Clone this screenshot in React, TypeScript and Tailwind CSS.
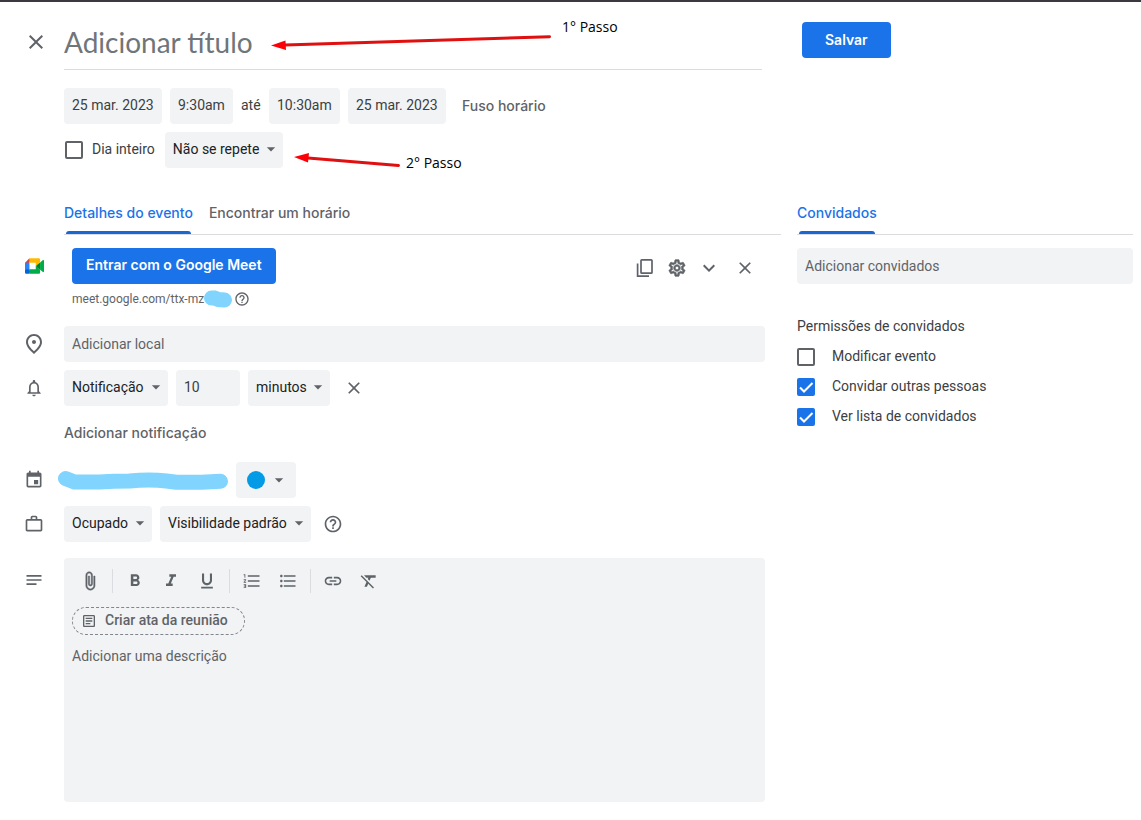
import { useState } from 'react';
import type { ReactNode } from 'react';
import clsx from 'clsx';
import {
    MdArrowDropDown,
    MdAttachFile,
    MdClose,
    MdEvent,
    MdExpandMore,
    MdFormatBold,
    MdFormatClear,
    MdFormatItalic,
    MdFormatListBulleted,
    MdFormatListNumbered,
    MdFormatUnderlined,
    MdHelpOutline,
    MdInsertLink,
    MdNotes,
    MdNotificationsNone,
    MdOutlineArticle,
    MdOutlinePlace,
    MdOutlineSettings,
    MdWorkOutline,
} from 'react-icons/md';

const field = 'h-9 rounded bg-[#f1f3f4] px-2 text-sm text-[#3c4043] outline-none placeholder:text-[#5f6368]';
const heading = "font-['Inter','Liberation_Sans',sans-serif] text-sm font-medium";
const primary = "h-9 rounded bg-[#1a73e8] font-['Inter','Liberation_Sans',sans-serif] text-sm font-semibold text-white";

interface RowProps {
    icon?: ReactNode;
    className?: string;
    children: ReactNode;
}

const Row = ({ icon, className, children }: RowProps) => (
    <div className="flex items-start">
        <div className="flex h-9 w-16 shrink-0 items-center justify-center pl-1 text-xl text-[#5f6368]">{icon}</div>
        <div className={clsx('flex min-w-0 flex-1 items-center gap-2', className)}>{children}</div>
    </div>
);

interface SelectProps {
    label: string;
    options: string[];
    width: string;
}

const Select = ({ label, options, width }: SelectProps) => (
    <div className={clsx('relative', width)}>
        <select
            aria-label={label}
            className="block h-9 w-full appearance-none rounded bg-[#f1f3f4] px-2 pb-0.5 text-sm text-[#202124] outline-none"
        >
            {options.map((option) => (
                <option key={option}>{option}</option>
            ))}
        </select>
        <MdArrowDropDown className="pointer-events-none absolute right-0.5 top-[7px] h-5 w-5 text-[#5f6368]" />
    </div>
);

interface CheckboxProps {
    label: string;
    defaultChecked?: boolean;
    className?: string;
}

const Checkbox = ({ label, defaultChecked = false, className }: CheckboxProps) => (
    <label className={clsx('flex items-center text-sm text-[#3c4043]', className)}>
        <span className="relative h-[18px] w-[18px] shrink-0">
            <input
                type="checkbox"
                defaultChecked={defaultChecked}
                className="peer block h-full w-full appearance-none rounded-xs border-2 border-[#5f6368] checked:border-[#1a73e8] checked:bg-[#1a73e8]"
            />
            <svg
                viewBox="0 0 18 18"
                className="pointer-events-none absolute inset-0 hidden fill-none stroke-white stroke-2 peer-checked:block"
            >
                <path d="M3 9.5l4 4 8.5-8.5" />
            </svg>
        </span>
        <span className="pb-0.5">{label}</span>
    </label>
);

interface TabProps {
    label: string;
    active?: boolean;
}

const Tab = ({ label, active = false }: TabProps) => (
    <button
        role="tab"
        aria-selected={active}
        className={clsx('relative h-[42px]', heading, active ? 'text-[#1a73e8]' : 'text-[#5f6368]')}
    >
        {label}
        {active && <span className="absolute inset-x-0.5 bottom-0 h-[3px] rounded-t-sm bg-[#1967d2]" />}
    </button>
);

interface IconButtonProps {
    label: string;
    className?: string;
    children: ReactNode;
}

const IconButton = ({ label, className = 'h-8 w-8', children }: IconButtonProps) => (
    <button
        aria-label={label}
        className={clsx('flex shrink-0 items-center justify-center text-xl text-[#5f6368]', className)}
    >
        {children}
    </button>
);

const MeetLogo = () => (
    <svg viewBox="0 0 87.5 72" className="h-4 w-[19px]">
        <path fill="#00832d" d="M49.5 36l8.53 9.75 11.47 7.33 2-17.02-2-16.64-11.69 6.44z" />
        <path fill="#0066da" d="M0 51.5V66c0 3.315 2.685 6 6 6h14.5l3-10.96-3-9.54-9.95-3z" />
        <path fill="#e94235" d="M20.5 0L0 20.5l10.55 3 9.95-3 2.95-9.41z" />
        <path fill="#2684fc" d="M20.5 20.5H0v31h20.5z" />
        <path
            fill="#00ac47"
            d="M82.6 8.68L69.5 19.42v33.66l13.16 10.79c1.97 1.54 4.85.135 4.85-2.37V11c0-2.535-2.945-3.925-4.91-2.32zM49.5 36v15.5h-29V72h43c3.315 0 6-2.685 6-6V53.08z"
        />
        <path fill="#ffba00" d="M63.5 0h-43v20.5h29V36l20-16.57V6c0-3.315-2.685-6-6-6z" />
    </svg>
);

const CopyIcon = () => (
    <svg viewBox="0 0 20 20" className="h-5 w-5 fill-none stroke-current" strokeWidth="1.7">
        <rect x="6" y="1.8" width="11" height="13.4" rx="0.8" />
        <path d="M2.6 5.5v12.7H14" />
    </svg>
);

// Marker strokes that hide the private parts of the page
const MeetScribble = () => (
    <svg viewBox="0 0 28 18" className="h-[18px] w-7 fill-none stroke-[#81d4fe]" strokeLinecap="round" strokeWidth="15">
        <path d="M7.5 8h3l4 1.500 6 .5" />
    </svg>
);

const CalendarScribble = () => (
    <svg
        viewBox="0 0 170 20"
        className="-ml-1.5 h-5 w-[170px] fill-none stroke-[#81d4fe]"
        strokeLinecap="round"
        strokeLinejoin="round"
        strokeWidth="15"
    >
        <path d="M7.500 8.500l9 3.500h25q14-1 30-1 20-2 37 0l10 1.300h25l19-1" />
    </svg>
);

// Red step arrows laid over the form
const Annotations = () => (
    <div className="pointer-events-none absolute -top-0.5 left-0 font-['Open_Sans','Noto_Sans',sans-serif] text-sm text-black">
        <svg viewBox="0 0 640 180" className="h-[180px] w-[640px]">
            <g stroke="#e01010" strokeWidth="3" strokeLinecap="round">
                <path d="M285 45L549.500 36.700" />
                <path d="M308 158L398.500 165.500" />
            </g>
            <g fill="#fb0007">
                <path d="M271 45.500L285.500 40.500L286 50z" />
                <path d="M294 157L309 153L308 162.500z" />
            </g>
        </svg>
        <span className="absolute left-[562px] top-[17px] whitespace-nowrap">1° Passo</span>
        <span className="absolute left-[406px] top-[153px] whitespace-nowrap">2° Passo</span>
    </div>
);

const Header = () => (
    <header className="flex gap-4 pt-4 pr-2">
        <div className="min-w-0 flex-1">
            <div className="flex pr-[19px]">
                <button aria-label="Fechar" className="flex h-12 w-16 shrink-0 items-center pl-6 text-2xl text-[#5f6368]">
                    <MdClose />
                </button>
                <input
                    aria-label="Adicionar título"
                    placeholder="Adicionar título"
                    className="h-[52px] min-w-0 flex-1 border-b border-[#dadce0] pb-1 font-['Lato','Liberation_Sans',sans-serif] text-[28px] text-[#3c4043] outline-none placeholder:text-[#70757a]"
                />
            </div>
            <div className="mt-[18px] flex flex-wrap items-center gap-2 pl-16 text-sm text-[#3c4043]">
                <input aria-label="Data de início" defaultValue="25 mar. 2023" className={clsx(field, 'w-[98px] pb-0.5')} />
                <input aria-label="Hora de início" defaultValue="9:30am" className={clsx(field, 'w-[63px] pb-0.5')} />
                <span className="w-5 pb-0.5">até</span>
                <input aria-label="Hora de término" defaultValue="10:30am" className={clsx(field, 'w-[71px] pb-0.5')} />
                <input aria-label="Data de término" defaultValue="25 mar. 2023" className={clsx(field, 'w-[98px] pb-0.5')} />
                <button className={clsx(heading, 'px-2 text-[#5f6368]')}>Fuso horário</button>
            </div>
            <div className="mt-2 flex items-center gap-2.5 pl-[65px]">
                <Checkbox label="Dia inteiro" className="gap-[9px]" />
                <Select label="Repetição" options={['Não se repete', 'Todos os dias']} width="w-[118px]" />
            </div>
        </div>
        <div className="w-[336px] shrink-0 pt-1 pl-[5px]">
            <button className={clsx(primary, 'px-[23px]')}>Salvar</button>
        </div>
    </header>
);

const Divider = () => <span className="mx-1 h-6 w-px bg-[#dadce0]" />;

const Editor = () => {
    const [text, setText] = useState('');

    return (
        <div className="flex min-w-0 flex-1 flex-col items-start rounded bg-[#f1f3f4] px-2 pt-[5px]">
            <div className="flex items-center">
                <IconButton label="Anexar arquivo" className="h-9 w-9">
                    <MdAttachFile className="stroke-current stroke-[0.6] [&>path:first-child]:stroke-none" />
                </IconButton>
                <Divider />
                <IconButton label="Negrito" className="h-9 w-9"><MdFormatBold /></IconButton>
                <IconButton label="Itálico" className="h-9 w-9"><MdFormatItalic /></IconButton>
                <IconButton label="Sublinhado" className="h-9 w-9"><MdFormatUnderlined /></IconButton>
                <Divider />
                <IconButton label="Lista numerada" className="h-9 w-9"><MdFormatListNumbered /></IconButton>
                <IconButton label="Lista com marcadores" className="h-9 w-9"><MdFormatListBulleted /></IconButton>
                <Divider />
                <IconButton label="Inserir link" className="h-9 w-9"><MdInsertLink /></IconButton>
                <IconButton label="Remover formatação" className="h-9 w-9"><MdFormatClear /></IconButton>
            </div>
            <button className="mt-2 flex h-7 items-center gap-2 rounded-full border border-dashed border-[#80868b] pl-2 pr-4 text-sm font-medium text-[#5f6368]">
                <MdOutlineArticle className="h-4 w-4" />
                <span className="pb-0.5">Criar ata da reunião</span>
            </button>
            <textarea
                aria-label="Adicionar uma descrição"
                placeholder="Adicionar uma descrição"
                value={text}
                onChange={(e) => setText(e.target.value)}
                className="mt-[11px] h-[156px] w-full resize-none text-sm text-[#3c4043] outline-none placeholder:text-[#5f6368]"
            />
        </div>
    );
};

const Details = () => (
    <main className="min-w-0 flex-1">
        <div role="tablist" className="ml-16 flex gap-4 border-b border-[#dadce0]">
            <Tab label="Detalhes do evento" active />
            <Tab label="Encontrar um horário" />
        </div>

        <div className="flex flex-col gap-2 pt-[13px] pr-4">
            <div>
                <Row icon={<MeetLogo />} className="pl-2">
                    <button className={clsx(primary, 'px-3.5 pb-0.5')}>Entrar com o Google Meet</button>
                    <div className="ml-auto flex items-center pt-1 pr-1">
                        <IconButton label="Copiar link"><CopyIcon /></IconButton>
                        <IconButton label="Opções de videochamada">
                            <MdOutlineSettings className="stroke-current stroke-[0.8] [&>path:first-child]:stroke-none" />
                        </IconButton>
                        <IconButton label="Mostrar detalhes"><MdExpandMore className="h-6 w-6" /></IconButton>
                        <IconButton label="Remover videochamada" className="ml-1 h-8 w-8"><MdClose /></IconButton>
                    </div>
                </Row>
                <div className="flex h-[34px] items-center pb-1 pl-[72px] text-xs text-[#5f6368]">
                    <span>meet.google.com/ttx-mz</span>
                    <MeetScribble />
                    <MdHelpOutline className="ml-0.5 h-4 w-4" />
                </div>
            </div>

            <Row icon={<MdOutlinePlace className="h-6 w-6" />}>
                <input aria-label="Adicionar local" placeholder="Adicionar local" className={clsx(field, 'w-full')} />
            </Row>

            <Row icon={<MdNotificationsNone />}>
                <Select label="Tipo de aviso" options={['Notificação', 'E-mail']} width="w-[104px]" />
                <input aria-label="Quantidade" defaultValue="10" className={clsx(field, 'w-16 pb-0.5')} />
                <Select label="Unidade" options={['minutos', 'horas', 'dias']} width="w-[82px]" />
                <IconButton label="Remover notificação"><MdClose /></IconButton>
            </Row>

            <button className={clsx(heading, 'ml-16 h-10 self-start pb-0.5 text-[#5f6368]')}>Adicionar notificação</button>

            <Row icon={<MdEvent />}>
                <CalendarScribble />
                <button aria-label="Cor do evento" className="flex h-9 w-[60px] items-center gap-1 rounded bg-[#f1f3f4] pl-[11px]">
                    <span className="h-[18px] w-[18px] rounded-full bg-[#039be5]" />
                    <MdArrowDropDown className="h-5 w-5 text-[#5f6368]" />
                </button>
            </Row>

            <Row icon={<MdWorkOutline />}>
                <Select label="Disponibilidade" options={['Ocupado', 'Livre']} width="w-[88px]" />
                <Select label="Visibilidade" options={['Visibilidade padrão', 'Público', 'Particular']} width="w-[151px]" />
                <MdHelpOutline className="ml-1 h-5 w-5 text-[#5f6368]" />
            </Row>

            <div className="mt-2 flex">
                <div className="flex h-11 w-16 shrink-0 items-center justify-center pl-1 text-xl text-[#5f6368]">
                    <MdNotes />
                </div>
                <Editor />
            </div>
        </div>
    </main>
);

const Guests = () => (
    <aside className="w-[336px] shrink-0">
        <div role="tablist" className="flex border-b border-[#dadce0]">
            <Tab label="Convidados" active />
        </div>
        <input
            aria-label="Adicionar convidados"
            placeholder="Adicionar convidados"
            className={clsx(field, 'mt-[13px] w-full')}
        />
        <fieldset className="mt-7">
            <legend className="h-[30px] text-sm/[28px] text-[#3c4043]">Permissões de convidados</legend>
            <Checkbox label="Modificar evento" className="h-[30px] gap-[17px]" />
            <Checkbox label="Convidar outras pessoas" defaultChecked className="h-[30px] gap-[17px]" />
            <Checkbox label="Ver lista de convidados" defaultChecked className="h-[30px] gap-[17px]" />
        </fieldset>
    </aside>
);

const App = () => (
    <div className="relative border-t-2 border-[#3b3840] bg-white pb-[18px] font-['Roboto','Liberation_Sans',sans-serif]">
        <Header />
        <div className="mt-6 flex gap-4 pr-2">
            <Details />
            <Guests />
        </div>
        <Annotations />
    </div>
);

export default App;
